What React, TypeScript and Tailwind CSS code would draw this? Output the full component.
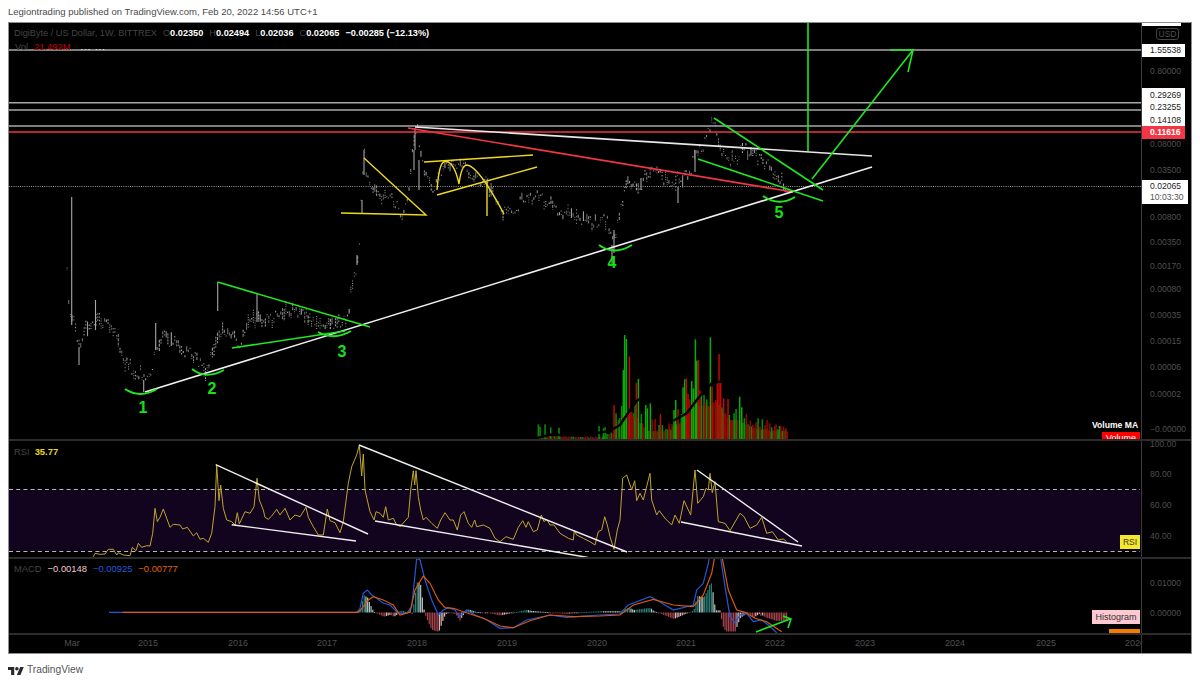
import React from "react";

type P = [number, number];

function rng(seed: number) {
  let a = seed;
  return () => {
    a |= 0; a = (a + 0x6d2b79f5) | 0;
    let t = Math.imul(a ^ (a >>> 15), 1 | a);
    t = (t + Math.imul(t ^ (t >>> 7), 61 | t)) ^ t;
    return ((t ^ (t >>> 14)) >>> 0) / 4294967296;
  };
}
const conv = (pts: P[], ox: number, oy: number): P[] => pts.map(([x, y]) => [ox + x / 3, oy + y / 3]);
const poly = (pts: P[]) => pts.map(([x, y]) => `${x.toFixed(1)},${y.toFixed(1)}`).join(" ");
function at(pts: P[], x: number) {
  if (x <= pts[0][0]) return pts[0][1];
  for (let i = 1; i < pts.length; i++) {
    if (x <= pts[i][0]) {
      const [x0, y0] = pts[i - 1];
      const [x1, y1] = pts[i];
      return y0 + ((y1 - y0) * (x - x0)) / (x1 - x0 || 1);
    }
  }
  return pts[pts.length - 1][1];
}

/* ---------- price path ---------- */
const pricePath: P[] = [
  ...conv([[80,235],[85,330],[95,390],[105,400],[118,480],[130,420],[150,410],[170,395],[190,400],[215,410],[235,450],[250,505],[275,535],[310,560],[335,545],[345,470],[370,440],[410,470],[460,500],[500,545],[520,490],[540,420],[565,430],[600,460],[625,400],[650,390],[680,395],[720,370],[780,370],[830,395],[860,410],[910,400],[925,360],[940,270],[955,210]], 40, 190),
  ...conv([[72,125],[80,190],[100,240],[130,260],[150,265],[180,310],[190,315],[205,250],[215,150],[225,100],[232,60],[240,130],[255,185],[280,230],[295,210],[318,155],[345,170],[370,155],[395,205],[435,215],[470,280],[490,300],[520,300],[550,270],[600,260],[650,295],[700,325],[760,345],[800,330],[822,395],[850,260],[860,225],[900,230]], 340, 110),
  ...conv([[30,215],[60,225],[90,260],[110,235],[150,230],[165,140],[185,150],[215,65],[235,110],[245,150],[280,190],[310,145],[350,175],[385,200],[410,250],[430,240],[420,275]], 640, 100),
];
const spikes: [number, number, number][] = [
  [71.7,197,325],[79,347,365],[95.5,300,330],[155.7,323,350],[217.7,282,311],[257,293,322],[143.7,380,392],[357,255,265],
  [415,128,150],[414,150,170],[364,150,175],[362,200,214],[614,230,253],[678,187,203],[612,245,265],[419,160,190],[641,178,190],[695,150,172],
];
const dashes = ["none", "2 1", "1 1.4", "3 1.2", "1.4 2"];
const candles: { x: number; a: number; b: number; o: number; d: string }[] = [];
{
  const r = rng(7);
  for (let x = 67; x < 789; x += 1.71) {
    const y = at(pricePath, x) + (r() - 0.5) * 12;
    const h = 1 + r() * r() * 7;
    candles.push({ x, a: y - h, b: y + h * (0.4 + r()), o: 0.55 + r() * 0.45, d: dashes[Math.floor(r() * dashes.length)] });
  }
}

/* ---------- volume ---------- */
const env: P[] = conv([[40,328],[100,326],[120,315],[200,312],[290,316],[335,305],[345,285],[365,240],[385,240],[400,250],[430,290],[470,300],[510,290],[530,280],[560,245],[590,220],[620,225],[650,210],[680,260],[720,270],[760,292],[860,300]], 500, 330);
const volBase: { x: number; y: number; g: boolean }[] = [];
{
  const r = rng(19);
  for (let x = 513; x < 787; x += 1.71) {
    volBase.push({ x, y: at(env, x) + r() * 3, g: r() > 0.55 });
  }
}
const gSp: P[] = conv([[115,283],[120,290],[135,283],[152,292],[177,293],[297,288],[310,295],[315,292],[348,250],[357,270],[365,228],[370,120],[374,15],[379,27],[405,225],[415,147],[424,252],[437,225],[442,235],[451,220],[477,285],[487,285],[513,300],[522,240],[527,210],[544,252],[549,172],[554,148],[575,153],[580,175],[586,28],[590,92],[604,195],[612,195],[620,208],[631,22],[666,232],[688,255],[702,250],[708,237],[719,200],[725,232],[733,265],[754,292],[774,265],[787,268],[815,292],[830,305],[838,288],[847,302]], 500, 330);
const rSp: P[] = conv([[342,225],[388,80],[393,245],[399,257],[409,158],[428,280],[456,268],[465,267],[472,302],[481,252],[492,305],[507,280],[516,282],[534,238],[540,280],[559,145],[564,192],[569,208],[595,90],[600,182],[615,218],[626,228],[636,170],[647,210],[652,160],[657,72],[662,157],[671,205],[676,250],[684,207],[693,270],[697,272],[739,252],[744,288],[751,272],[759,285],[768,277],[780,290],[795,285],[801,270],[809,280],[824,288],[828,283],[842,287],[851,290],[858,295]], 500, 330);
const volMA = conv([[100,327],[150,314],[250,317],[330,302],[360,285],[380,255],[410,212],[432,200]], 500, 330);
const volMA2 = conv([[520,272],[560,250],[600,197],[640,155],[665,155]], 500, 330);

/* ---------- RSI ---------- */
const rsi: P[] = [
  ...conv([[280,380],[285,370],[300,373],[315,372],[325,358],[340,358],[350,375],[355,368],[370,375],[390,377],[397,352],[408,362],[415,340],[425,352],[440,347],[450,348],[458,310],[465,235],[472,275],[480,262],[490,237],[500,265],[510,292],[520,283],[540,285],[548,297],[562,292],[580,318],[590,308],[600,328],[610,325],[625,337],[635,310],[645,230],[650,105],[657,212],[662,165],[670,235],[680,270],[695,275],[705,285],[712,248],[718,282],[735,245],[750,250],[762,230],[771,145],[778,210],[790,240],[795,262],[805,268],[815,258],[830,238],[840,255],[855,235],[870,270],[885,255],[900,260],[918,232],[925,262],[940,290],[955,315],[970,315],[982,237],[990,272],[1005,278],[1020,308],[1030,275],[1045,160],[1055,110],[1070,75],[1078,45],[1085,138],[1090,72],[1095,180],[1110,245],[1122,270],[1128,245],[1140,250],[1150,262],[1157,230],[1165,270],[1180,265],[1190,285],[1200,288]], 0, 430),
  ...conv([[0,260],[25,232],[32,150],[40,92],[44,135],[48,92],[55,170],[62,210],[70,240],[78,232],[95,250],[112,265],[122,240],[135,218],[150,240],[160,240],[172,270],[182,225],[192,215],[205,250],[215,262],[224,240],[230,260],[250,255],[270,265],[285,295],[300,305],[318,290],[340,298],[355,262],[368,242],[378,262],[385,245],[400,275],[412,270],[424,225],[432,245],[440,238],[450,255],[462,255],[480,280],[505,295],[520,300],[523,272],[530,285],[550,295],[570,305],[585,315],[595,275],[605,270],[614,230],[622,255],[630,290],[642,328],[652,270],[660,240],[668,115],[680,105],[695,150],[704,122],[710,182],[720,160],[730,180],[745,120],[750,100],[755,180],[770,225],[778,212],[795,235],[815,255],[825,225],[838,250],[852,182],[872,225],[885,90],[893,190],[910,170],[918,145],[925,150],[930,100],[937,158],[945,125],[955,245],[975,250],[990,272],[1020,220],[1032,230],[1050,265],[1070,255],[1085,232],[1100,280],[1117,275],[1135,300],[1150,297],[1160,305]], 400, 440),
];

/* ---------- MACD ---------- */
const blue: P[] = [
  [109,612.3],[1070/3,612.3],
  ...conv([[1080,535],[1090,490],[1102,480],[1115,495],[1130,505],[1150,520],[1170,525],[1190,545]], 0, 430),
  ...conv([[0,520],[20,520],[35,500],[50,355],[60,360],[75,420],[95,480],[115,525],[130,510],[145,503],[165,510],[178,530],[200,510],[225,525],[260,540],[300,565],[340,563],[380,540],[450,525],[500,532],[600,525],[660,522],[685,495],[750,470],[770,480],[820,510],[880,495],[890,450],[910,430],[925,370],[930,340],[960,340],[975,440],[990,530],[1005,548],[1020,525],[1040,520],[1060,545],[1085,540],[1105,555],[1130,578]], 400, 440),
];
const orange: P[] = [
  [122.7,612.3],[1075/3,612.3],
  ...conv([[1090,530],[1105,510],[1120,500],[1150,510],[1180,525]], 0, 430),
  ...conv([[0,525],[30,517],[45,450],[70,408],[90,430],[115,480],[135,503],[160,505],[190,515],[250,535],[300,558],[340,563],[390,542],[450,525],[520,530],[600,528],[660,525],[700,495],[760,478],[820,495],[880,500],[910,465],[935,400],[945,345],[965,345],[985,450],[1010,510],[1035,517],[1065,535],[1100,545],[1145,575]], 400, 440),
];
const hist: { x: number; y: number; h: number; c: string }[] = [];
{
  let prev = 0;
  for (let x = 358.5; x < 787; x += 1.71) {
    const xx = Math.min(x, 776);
    const v = at(orange, xx) - at(blue, xx);
    const amt = Math.max(-19, Math.min(30, v * 1.3 + (x > 760 ? -3 : 0)));
    const rising = amt > prev;
    const c = amt >= 0 ? (rising ? "#2a7f76" : "#aecbc7") : rising ? "#d9b5b9" : "#a8434e";
    hist.push({ x, y: amt >= 0 ? 612.5 - amt : 612.5, h: Math.max(0.8, Math.abs(amt)), c });
    prev = amt;
  }
}

/* ---------- axes ---------- */
const gray = "#4f4f4f";
const mainScale: [string, number][] = [["0.80000",71],["0.08000",144],["0.03500",169.5],["0.00800",217],["0.00350",242],["0.00170",266],["0.00080",289],["0.00035",315],["0.00015",340.5],["0.00006",366.5],["0.00002",394]];
const years: [string, number][] = [["Mar",72],["2015",148],["2016",238],["2017",327],["2018",417],["2019",507],["2020",597],["2021",686],["2022",775],["2023",865],["2024",955],["2025",1046],["2026",1135]];

function ScaleLabel({ y, top, x = 8, children }: { y: number; top: number; x?: number; children: React.ReactNode }) {
  return (
    <span className="absolute leading-[10px] text-[8.6px] whitespace-nowrap text-[#4f4f4f]" style={{ top: y - top - 5, left: x }}>
      {children}
    </span>
  );
}

const green = "#1fe81f";
const Num = ({ x, y, t }: { x: number; y: number; t: string }) => (
  <text x={x} y={y} textAnchor="middle" fontSize="16" fontWeight="700" fill="#18e018">{t}</text>
);

function MainDrawing() {
  return (
    <svg viewBox="9 23 1132 416" className="block w-[1132px] h-[416px]" fontFamily="'Liberation Sans', sans-serif">
      <g stroke="#a8a8a8" strokeWidth="1.1">
        {candles.map((c, i) => (
          <line key={i} x1={c.x} x2={c.x} y1={c.a} y2={c.b} opacity={c.o} strokeDasharray={c.d} />
        ))}
        {spikes.map(([x, a, b], i) => (
          <line key={i} x1={x} x2={x} y1={a} y2={b} />
        ))}
      </g>
      {volBase.map((b, i) => (
        <rect key={i} x={b.x} y={b.y} width="1.5" height={439 - b.y} fill={b.g ? "#067f06" : "#8a0808"} />
      ))}
      {gSp.map(([x, y], i) => (
        <rect key={i} x={x - 0.7} y={y} width="1.5" height={439 - y} fill={at(env, x) - y > 12 ? "#06b006" : "#078f07"} />
      ))}
      {rSp.map(([x, y], i) => (
        <rect key={i} x={x - 0.7} y={y} width="1.5" height={439 - y} fill={at(env, x) - y > 12 ? "#c00808" : "#960808"} />
      ))}
      <polyline points={poly(volMA)} fill="none" stroke="#000" strokeWidth="2.4" />
      <polyline points={poly(volMA2)} fill="none" stroke="#000" strokeWidth="2.4" />

      <line x1="9" x2="1141" y1="186.5" y2="186.5" stroke="#9a9a9a" strokeWidth="1" strokeDasharray="1 1.2" />
      <g stroke="#a8a8a8" strokeWidth="1.4">
        <line x1="9" x2="1141" y1="50" y2="50" />
        <line x1="9" x2="1141" y1="102.7" y2="102.7" />
        <line x1="9" x2="1141" y1="110" y2="110" />
        <line x1="9" x2="1141" y1="126" y2="126" />
      </g>
      <line x1="9" x2="1141" y1="132" y2="132" stroke="#f23645" strokeWidth="1.5" />

      <g fill="none" stroke="#f0d91e" strokeWidth="1.4">
        <polyline points="341,213 426,215 364,158" />
        <line x1="424" y1="162" x2="533" y2="155" />
        <line x1="437" y1="195" x2="537" y2="167" />
        <line x1="487" y1="182" x2="487" y2="216" />
        <path d="M437 190 C439 165 442 161 446 161.5 C452 162 456 170 459 184 C461 168 464 165 467 165 C475 166 487 182 504 214" />
      </g>

      <line x1="415" y1="127" x2="872" y2="156" stroke="#e8e8e8" strokeWidth="1.6" />
      <line x1="408" y1="128" x2="793" y2="192" stroke="#f23645" strokeWidth="1.6" />
      <line x1="145" y1="392" x2="872" y2="167" stroke="#f0f0f0" strokeWidth="1.6" />

      <g fill="none" stroke={green} strokeWidth="1.6">
        <line x1="217.7" y1="282" x2="370" y2="327" />
        <line x1="232" y1="348" x2="345" y2="331" />
        <line x1="714" y1="118" x2="823" y2="190" />
        <line x1="698" y1="159" x2="823" y2="201" />
        <line x1="808" y1="20" x2="808" y2="151" />
        <polyline points="812,179 913,50" />
        <polyline points="890,50 913,50 908,72" />
      </g>
      <g fill="none" stroke={green} strokeWidth="2">
        <path d="M125 389 Q140 399 157 389" />
        <path d="M192 369 Q206 380 224 370" />
        <path d="M318 332 Q334 341 351 331" />
        <path d="M599 245 Q614 256 632 245" />
        <path d="M763 196 Q779 207 795 197" />
      </g>
      <Num x={143} y={413} t="1" />
      <Num x={212} y={394} t="2" />
      <Num x={342} y={357} t="3" />
      <Num x={612} y={268} t="4" />
      <Num x={779} y={218} t="5" />
    </svg>
  );
}

function RsiDrawing() {
  return (
    <svg viewBox="9 441 1132 116" className="block w-[1132px] h-[116px]">
      <rect x="9" y="489" width="1131" height="62" fill="#12041f" />
      <g stroke="#b8b8b8" strokeWidth="1" strokeDasharray="4 3.2">
        <line x1="9" x2="1140" y1="489.5" y2="489.5" />
        <line x1="9" x2="1140" y1="551.5" y2="551.5" />
      </g>
      <polyline points={poly(rsi)} fill="none" stroke="#bfa52c" strokeWidth="1" />
      <g stroke="#eeeeee" strokeWidth="1.4">
        <line x1="215.7" y1="464.7" x2="368" y2="534" />
        <line x1="231.7" y1="524.7" x2="356" y2="541" />
        <line x1="359" y1="445" x2="627" y2="552" />
        <line x1="375" y1="521" x2="588" y2="557.5" />
        <line x1="697" y1="470" x2="798" y2="542" />
        <line x1="681" y1="522" x2="802" y2="546" />
      </g>
    </svg>
  );
}

function MacdDrawing() {
  return (
    <svg viewBox="9 559 1132 74" className="block w-[1132px] h-[74px]">
      {hist.map((h, i) => (
        <rect key={i} x={h.x} y={h.y} width="1.2" height={h.h} fill={h.c} />
      ))}
      <polyline points={poly(blue)} fill="none" stroke="#2458d8" strokeWidth="1.2" />
      <polyline points={poly(orange)} fill="none" stroke="#d8590f" strokeWidth="1.2" />
      <g fill="none" stroke={green} strokeWidth="1.6">
        <line x1="756" y1="632" x2="790" y2="619" />
        <polyline points="783,616 791,619 788,628" />
      </g>
    </svg>
  );
}

export default function App() {
  return (
    <div className="w-[1200px] h-[683px] bg-white overflow-hidden font-['Liberation_Sans',sans-serif]">
      <div className="h-[22px] pl-2 pt-[6px] text-[9.5px] leading-[12px] text-[#4a4a4a] whitespace-nowrap">
        Legiontrading published on TradingView.com, Feb 20, 2022 14:56 UTC+1
      </div>

      <div className="mx-2 w-[1184px] h-[632px] border border-[#8f8f93] bg-black flex flex-col">
        {/* main pane */}
        <div className="flex h-[416px]">
          <div className="relative w-[1132px] overflow-hidden">
            <div className="absolute left-[5px] top-[4px] flex items-center gap-[6px] text-[9.2px] leading-[12px] whitespace-nowrap">
              <span className="text-[#444444]">DigiByte / US Dollar, 1W, BITTREX</span>
              <span className="text-[#444444]">O<b className="font-bold text-white">0.02350</b></span>
              <span className="text-[#444444]">H<b className="font-bold text-white">0.02494</b></span>
              <span className="text-[#444444]">L<b className="font-bold text-white">0.02036</b></span>
              <span className="text-[#444444]">C<b className="font-bold text-white">0.02065</b></span>
              <span className="font-bold text-white">−0.00285 (−12.13%)</span>
            </div>
            <div className="absolute left-[6px] top-[18px] flex items-center gap-[6px] text-[9.4px] leading-[12px] whitespace-nowrap">
              <span className="text-[#444444]">Vol</span>
              <span className="text-[#c40000]">21.492M</span>
              <span className="ml-[4px] text-white tracking-[1px]">... ...</span>
            </div>
            <MainDrawing />
            <span className="absolute left-[1083px] top-[396px] font-bold text-[8.6px] leading-[12px] text-white whitespace-nowrap">Volume MA</span>
            <span className="absolute left-[1093px] top-[409px] w-[38px] h-[7px] bg-[#ff0000] overflow-hidden text-center text-[9px] leading-[12px] text-white">Volume</span>
          </div>
          <div className="relative flex-1 border-l border-[#3c3c3c] overflow-hidden">
            <span className="absolute left-0 top-0 w-[39px] h-[3px] bg-white" />
            <span className="absolute left-[14px] top-[5px] w-[23px] h-[12px] border border-[#444444] rounded-[3px] text-center text-[8.5px] leading-[10px] text-[#4f4f4f]">USD</span>
            {mainScale.map(([t, y]) => (
              <ScaleLabel key={t} y={y} top={23}>{t}</ScaleLabel>
            ))}
            <ScaleLabel y={428.5} top={23} x={8}>−0.00000</ScaleLabel>
            <div className="absolute left-0 top-[21px] w-[43px] h-[13px] bg-white pl-2 text-[8.6px] leading-[13px] text-[#222222]">1.55538</div>
            <div className="absolute left-0 top-[65px] w-[43px] h-[38px] bg-white pl-2 pt-[1px] text-[8.6px] leading-[12.4px] text-[#222222]">
              <div>0.29269</div>
              <div>0.23255</div>
              <div>0.14108</div>
            </div>
            <div className="absolute left-0 top-[103px] w-[43px] h-[13px] bg-[#f23645] pl-2 font-bold text-[8.6px] leading-[13px] text-white">0.11616</div>
            <div className="absolute left-0 top-[157px] w-[46px] h-[24px] bg-white pl-2 pt-px text-[8.6px] leading-[10.5px] text-[#222222]">
              <div>0.02065</div>
              <div className="text-[#555555]">10:03:30</div>
            </div>
          </div>
        </div>

        {/* RSI pane */}
        <div className="flex h-[118px] border-t-2 border-[#2c2c2c]">
          <div className="relative w-[1132px] overflow-hidden">
            <div className="absolute z-10 left-[5px] top-[5px] flex gap-[5px] text-[9.4px] leading-[12px]">
              <span className="text-[#444444]">RSI</span>
              <span className="font-bold text-[#e8d71e]">35.77</span>
            </div>
            <RsiDrawing />
            <span className="absolute left-[1111px] top-[94px] w-[20px] h-[14px] bg-[#f5e82a] text-center text-[8.5px] leading-[14px] text-[#333333]">RSI</span>
          </div>
          <div className="relative flex-1 border-l border-[#3c3c3c] overflow-hidden">
            <ScaleLabel y={443.5} top={441} x={8}>100.00</ScaleLabel>
            <ScaleLabel y={474} top={441} x={8}>80.00</ScaleLabel>
            <ScaleLabel y={504.5} top={441} x={8}>60.00</ScaleLabel>
            <ScaleLabel y={535.5} top={441} x={8}>40.00</ScaleLabel>
          </div>
        </div>

        {/* MACD pane */}
        <div className="flex h-[76px] border-t-2 border-[#2c2c2c]">
          <div className="relative w-[1132px] overflow-hidden">
            <div className="absolute z-10 left-[5px] top-[4px] flex gap-[6px] text-[9.4px] leading-[12px]">
              <span className="text-[#444444]">MACD</span>
              <span className="text-[#f3c9cf]">−0.00148</span>
              <span className="text-[#2458d8]">−0.00925</span>
              <span className="text-[#e0600f]">−0.00777</span>
            </div>
            <MacdDrawing />
            <span className="absolute left-[1083px] top-[51px] w-[48px] h-[14px] bg-[#ffc9d2] text-center text-[9px] leading-[14px] text-[#333333]">Histogram</span>
            <span className="absolute left-[1100px] top-[70px] w-[31px] h-[4px] bg-[#f57c00]" />
          </div>
          <div className="relative flex-1 border-l border-[#3c3c3c] overflow-hidden">
            <ScaleLabel y={583} top={559} x={8}>0.01000</ScaleLabel>
            <ScaleLabel y={612.5} top={559} x={8}>0.00000</ScaleLabel>
          </div>
        </div>

        {/* time axis */}
        <div className="flex h-[20px] border-t-2 border-[#2c2c2c]">
          <div className="relative w-[1132px] overflow-hidden">
            {years.map(([t, x]) => (
              <span key={t} className="absolute top-[2px] -translate-x-1/2 text-[9px] leading-[12px]" style={{ left: x - 9, color: gray }}>{t}</span>
            ))}
          </div>
          <div className="flex-1 border-l border-[#3c3c3c]" />
        </div>
      </div>

      <div className="flex items-center gap-[3px] pl-2 pt-[9px]">
        <svg viewBox="0 0 36 22" className="w-[16px] h-[10px]" fill="#2a2a2a">
          <path d="M14 22H7V11H0V4h14v18zM28 22h-8l7.5-18h8L28 22z" />
          <circle cx="20" cy="8" r="4" />
        </svg>
        <span className="text-[10.2px] leading-[14px] text-[#555555]">TradingView</span>
      </div>
    </div>
  );
}
